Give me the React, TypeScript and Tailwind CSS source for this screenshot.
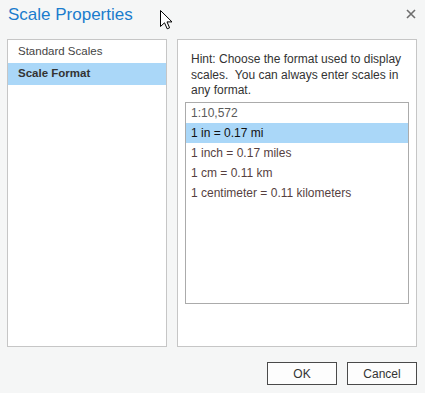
import { useState } from 'react'

const FONT = { fontFamily: '"Liberation Sans", Arial, sans-serif' }

const categories = ['Standard Scales', 'Scale Format']
const formats = [
  '1:10,572',
  '1 in = 0.17 mi',
  '1 inch = 0.17 miles',
  '1 cm = 0.11 km',
  '1 centimeter = 0.11 kilometers',
]

export default function App() {
  const [category, setCategory] = useState(1)
  const [format, setFormat] = useState(1)

  return (
    <div
      className="relative w-[425px] h-[393px] bg-[#f5f6f6] flex flex-col text-[#3b3b3b] select-none"
      style={FONT}
    >
      {/* Title bar */}
      <div className="h-[39px] flex items-start justify-between pl-2 pr-[9px]">
        <h1 className="text-[17px] leading-[22px] pt-[4px] text-[#1a7ccd]">Scale Properties</h1>
        <button className="mt-[8px] w-[11px] h-[11px] flex items-center justify-center">
          <svg width="10" height="10" viewBox="0 0 10 10">
            <path d="M1 1L9 9M9 1L1 9" stroke="#6e6e6e" strokeWidth="1.6" />
          </svg>
        </button>
      </div>

      {/* Mouse pointer */}
      <svg className="absolute left-[160px] top-[10px]" width="13" height="20" viewBox="0 0 13 20">
        <path
          d="M0.5 0.5 L0.5 16.5 L4.5 12.8 L7.2 18.8 L9.6 17.8 L7 11.9 L12 11.9 Z"
          fill="#fff"
          stroke="#000"
          strokeWidth="1"
          strokeLinejoin="miter"
        />
      </svg>

      {/* Panels */}
      <div className="flex gap-[10px] px-[7px] h-[308px]">
        <div className="w-[160px] h-full bg-white border border-[#c6c6c6] pt-px">
          {categories.map((c, i) => (
            <div
              key={c}
              onClick={() => setCategory(i)}
              className={`h-[22px] flex items-center pl-[10px] text-[11.5px] ${
                i === category ? 'bg-[#aad7f8] font-bold text-[#333]' : 'text-[#444]'
              }`}
            >
              {c}
            </div>
          ))}
        </div>

        <div className="w-[240px] h-full bg-white border border-[#c6c6c6] px-[7px] pt-[12px]">
          <p className="pl-[6px] text-[12px] leading-[15.5px] text-[#333] whitespace-nowrap">
            Hint: Choose the format used to display
            <br />
            scales.&nbsp; You can always enter scales in
            <br />
            any format.
          </p>
          <div className="mt-[3px] h-[202px] border border-[#ababab] bg-white">
            {formats.map((f, i) => (
              <div
                key={f}
                onClick={() => setFormat(i)}
                className={`h-[20px] flex items-center pl-[5px] text-[12px] ${
                  i === format
                    ? 'bg-[#aad7f8] text-[#111]'
                    : i === 0
                      ? 'text-[#5a5a5a]'
                      : 'text-[#563f3f]'
                }`}
              >
                {f}
              </div>
            ))}
          </div>
        </div>
      </div>

      {/* Footer */}
      <div className="flex justify-end gap-[10px] pr-[8px] pt-[15px]">
        <button className="w-[70px] h-[23px] border border-[#4a4a4a] bg-[#fdfdfd] text-[12px] text-[#333]">
          OK
        </button>
        <button className="w-[70px] h-[23px] border border-[#4a4a4a] bg-[#fdfdfd] text-[12px] text-[#333]">
          Cancel
        </button>
      </div>
    </div>
  )
}
